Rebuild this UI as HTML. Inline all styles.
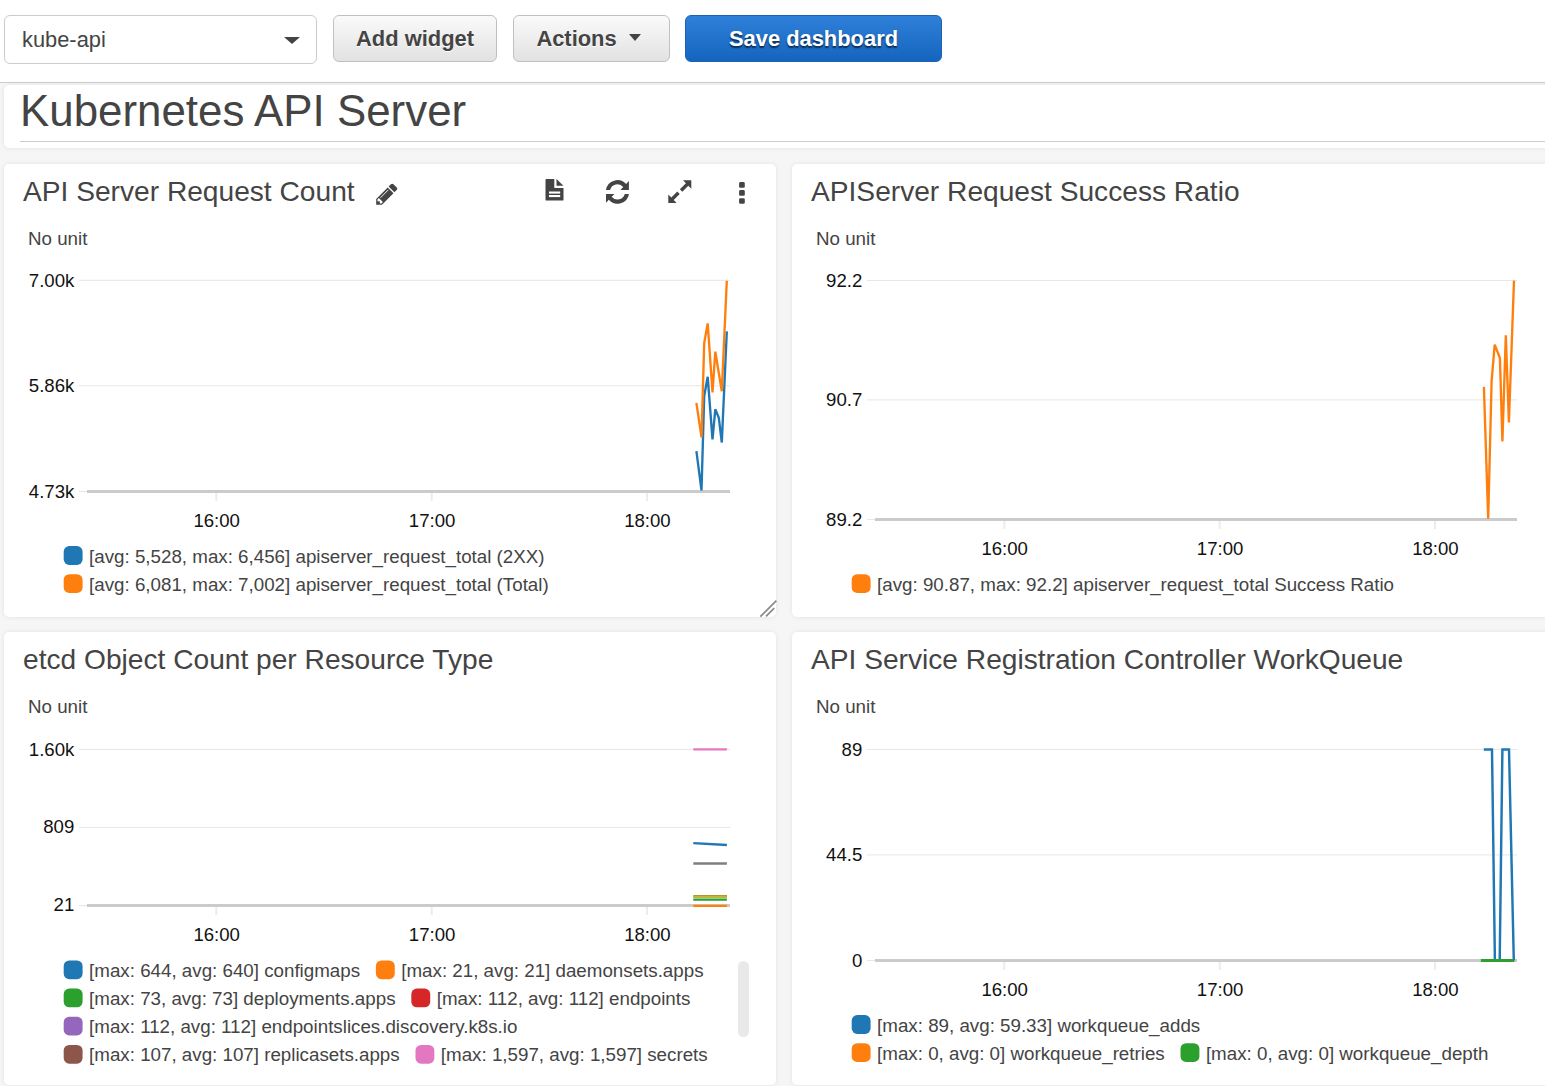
<!DOCTYPE html>
<html lang="en">
<head>
<meta charset="utf-8">
<title>kube-api</title>
<style>
*{box-sizing:border-box;margin:0;padding:0}
html,body{width:1545px;height:1086px;overflow:hidden}
body{background:#f6f6f6;font-family:"Liberation Sans",Arial,sans-serif;color:#444;position:relative}
.abs{position:absolute}
#toolbar{position:absolute;left:0;top:0;width:1545px;height:83px;background:#fff;border-bottom:1px solid #ccc}
#sel{position:absolute;left:4px;top:15px;width:313px;height:49px;border:1px solid #ccc;border-radius:6px;background:#fff;font-size:21.85px;line-height:47px;padding-left:17px;color:#444}
#sel i{position:absolute;right:16px;top:21px;width:0;height:0;border-left:8px solid transparent;border-right:8px solid transparent;border-top:7.5px solid #444}
.btn{position:absolute;top:15px;height:47px;border:1px solid #c0c0c0;border-radius:6px;background:linear-gradient(#fafafa,#e2e2e2);font-weight:bold;font-size:21.9px;line-height:45.5px;text-align:center;color:#444;white-space:nowrap;text-shadow:0 1px 0 #fff}
.btn.pri{background:linear-gradient(#2f80d8,#1565c0);border-color:#1a62b4;color:#fff;text-shadow:0 1.5px 1.5px rgba(0,0,0,.6)}
.caret{position:absolute;left:114.9px;top:17.9px;width:0;height:0;border-left:6.6px solid transparent;border-right:6.6px solid transparent;border-top:7.3px solid #444}
.panel{position:absolute;background:#fff;border-radius:5px;box-shadow:0 0 5px rgba(0,0,0,.085)}
.ptitle{position:absolute;left:19px;top:10px;font-size:28.15px;line-height:36px;white-space:nowrap;color:#444}
.unit{position:absolute;left:24px;top:64.4px;font-size:18.75px;line-height:22px;color:#444;white-space:nowrap}
svg{position:absolute;left:0;top:0;overflow:visible}
svg text{font-family:"Liberation Sans",Arial,sans-serif;font-size:18.6px;fill:#111}
.lg{position:absolute;font-size:18.75px;line-height:28.17px;color:#444;white-space:nowrap}
.lg i{display:inline-block;width:25.4px;height:1px}
.lg span{display:inline-block;margin-right:15.8px}
</style>
</head>
<body>
<div id="toolbar">
  <div id="sel">kube-api<i></i></div>
  <div class="btn" style="left:333px;width:164px">Add widget</div>
  <div class="btn" style="left:513px;width:157px;text-align:left;padding-left:22.4px">Actions<span class="caret"></span></div>
  <div class="btn pri" style="left:685px;width:257px">Save dashboard</div>
</div>

<div class="panel" id="tp" style="left:4px;top:85px;width:1560px;height:63px">
  <div class="abs" style="left:16px;top:0px;font-size:43.87px;line-height:52px;color:#444;white-space:nowrap">Kubernetes API Server</div>
  <div class="abs" style="left:16px;top:56px;width:1540px;height:1px;background:#ccc"></div>
</div>

<!-- PANEL 1 -->
<div class="panel" id="p1" style="left:4px;top:164px;width:772px;height:453px">
  <div class="ptitle">API Server Request Count</div>
  <div class="unit">No unit</div>
  <svg width="772" height="453" id="s1">
    <rect x="75" y="115.8" width="651" height="1" fill="#e6e6e6"/>
     <text x="70.3" y="123.3" text-anchor="end">7.00k</text>
    <rect x="75" y="221.3" width="651" height="1" fill="#e6e6e6"/>
     <text x="70.3" y="227.9" text-anchor="end">5.86k</text>
    <rect x="75" y="327.0" width="8" height="1" fill="#e6e6e6"/>
     <text x="70.3" y="333.6" text-anchor="end">4.73k</text>
    <rect x="83" y="326.0" width="643" height="3" fill="#cbcbcb"/>
    <rect x="211.3" y="329.0" width="2" height="8" fill="#ececec"/>
    <text x="212.7" y="362.8" text-anchor="middle">16:00</text>
    <rect x="426.7" y="329.0" width="2" height="8" fill="#ececec"/>
    <text x="428.1" y="362.8" text-anchor="middle">17:00</text>
    <rect x="642.0" y="329.0" width="2" height="8" fill="#ececec"/>
    <text x="643.4" y="362.8" text-anchor="middle">18:00</text>
    <polyline points="692.4,287.2 697.5,326.4 700.2,232.0 703.7,212.8 708.5,275.3 711.3,245.3 714.8,253.8 717.8,278.5 722.8,167.4" fill="none" stroke="#1f77b4" stroke-width="2.35"/>
    <polyline points="692.4,238.9 697.5,273.4 700.2,179.0 703.7,159.4 708.5,228.5 711.3,187.7 717.8,227.3 722.8,116.7" fill="none" stroke="#ff7f0e" stroke-width="2.35"/>
    <g transform="translate(-4,-164)" fill="#444">
    <path fill-rule="evenodd" transform="translate(376.2,202.926) scale(0.013861,-0.013861)" d="M382 -38L482.5 62.5L190.5 354.5L90 254V128H256V-38ZM886 928q0 22 -22 22q-10 0 -17 -7l-542 -542q-7 -7 -7 -17q0 -22 22 -22q10 0 17 7l542 542q7 7 7 17zM832 1120l416 -416l-832 -832h-416v416zM1515 1024q0 -53 -37 -90l-166 -166l-416 416l166 165q36 38 90 38q53 0 91 -38l235 -234q37 -39 37 -91z"/>
    <path d="M545.5,179.9 q0,-0.9 0.9,-0.9 H554.3 V188 H563.5 V199.7 q0,0.9 -0.9,0.9 H546.4 q-0.9,0 -0.9,-0.9 Z M556.5,179 L563.4,185.8 H556.5 Z"/>
    <rect x="549" y="191.5" width="11.2" height="2.1" fill="#fff"/><rect x="549" y="195" width="11.2" height="2.1" fill="#fff"/>
    <path d="M605.92,189.90 A11.7,11.7 0 0 1 626.08,184.00 L628.90,181.00 V189.90 H620.40 L623.27,187.01 A7.6,7.6 0 0 0 610.12,189.90 Z"/>
    <path d="M605.92,189.90 A11.7,11.7 0 0 1 626.08,184.00 L628.90,181.00 V189.90 H620.40 L623.27,187.01 A7.6,7.6 0 0 0 610.12,189.90 Z" transform="rotate(180 617.45 191.9)"/>
    <path d="M683,180.3 H691.3 V188.8 L688.3,185.7 L682.3,191.7 L679.9,189.3 L685.9,183.3 Z"/>
    <path d="M683,180.3 H691.3 V188.8 L688.3,185.7 L682.3,191.7 L679.9,189.3 L685.9,183.3 Z" transform="rotate(180 679.8 191.65)"/>
    <rect x="739.1" y="182.1" width="5.7" height="5.7" rx="1.4"/>
    <rect x="739.1" y="190.1" width="5.7" height="5.7" rx="1.4"/>
    <rect x="739.1" y="198.15" width="5.7" height="5.7" rx="1.4"/>
    <path d="M760.3,616.7 L776.4,600.6 M766,616.3 L774.2,608.1" stroke="#8c8c8c" stroke-width="1.8" fill="none"/>
    </g>
    <rect x="59.69" y="382.10" width="18.9" height="18.8" rx="5.6" fill="#1f77b4"/>
    <rect x="59.69" y="410.20" width="18.9" height="18.8" rx="5.6" fill="#ff7f0e"/>
  </svg>
  <div class="lg" style="left:59.7px;top:378.7px"><i class="sp"></i>[avg: 5,528, max: 6,456] apiserver_request_total (2XX)</div>
  <div class="lg" style="left:59.7px;top:406.7px"><i class="sp"></i>[avg: 6,081, max: 7,002] apiserver_request_total (Total)</div>
</div>

<!-- PANEL 2 -->
<div class="panel" id="p2" style="left:792px;top:164px;width:772px;height:453px">
  <div class="ptitle">APIServer Request Success Ratio</div>
  <div class="unit">No unit</div>
  <svg width="772" height="453" id="s2">
    <rect x="75" y="116.0" width="650" height="1" fill="#e6e6e6"/>
     <text x="70.3" y="122.6" text-anchor="end">92.2</text>
    <rect x="75" y="235.4" width="650" height="1" fill="#e6e6e6"/>
     <text x="70.3" y="242.0" text-anchor="end">90.7</text>
    <rect x="75" y="355.0" width="8" height="1" fill="#e6e6e6"/>
     <text x="70.3" y="361.6" text-anchor="end">89.2</text>
    <rect x="83" y="354.0" width="642" height="3" fill="#cbcbcb"/>
    <rect x="211.3" y="357.0" width="2" height="8" fill="#ececec"/>
    <text x="212.7" y="390.8" text-anchor="middle">16:00</text>
    <rect x="426.7" y="357.0" width="2" height="8" fill="#ececec"/>
    <text x="428.1" y="390.8" text-anchor="middle">17:00</text>
    <rect x="642.0" y="357.0" width="2" height="8" fill="#ececec"/>
    <text x="643.4" y="390.8" text-anchor="middle">18:00</text>
    <polyline points="691.9,222.9 696.2,354.8 699.6,217.3 702.7,180.6 707.9,194.0 710.4,277.4 713.8,171.3 716.9,258.5 722.0,116.6" fill="none" stroke="#ff7f0e" stroke-width="2.35"/>
    <rect x="59.69" y="410.20" width="18.9" height="18.8" rx="5.6" fill="#ff7f0e"/>
  </svg>
  <div class="lg" style="left:59.7px;top:406.7px"><i class="sp"></i>[avg: 90.87, max: 92.2] apiserver_request_total Success Ratio</div>
</div>

<!-- PANEL 3 -->
<div class="panel" id="p3" style="left:4px;top:632px;width:772px;height:453px">
  <div class="ptitle">etcd Object Count per Resource Type</div>
  <div class="unit">No unit</div>
  <svg width="772" height="453" id="s3">
    <rect x="75" y="116.9" width="651" height="1" fill="#e6e6e6"/>
     <text x="70.3" y="123.5" text-anchor="end">1.60k</text>
    <rect x="75" y="194.9" width="651" height="1" fill="#e6e6e6"/>
     <text x="70.3" y="201.2" text-anchor="end">809</text>
    <rect x="75" y="273.0" width="8" height="1" fill="#e6e6e6"/>
     <text x="70.3" y="278.7" text-anchor="end">21</text>
    <rect x="83" y="272.0" width="643" height="3" fill="#cbcbcb"/>
    <rect x="211.3" y="275.0" width="2" height="8" fill="#ececec"/>
    <text x="212.7" y="308.8" text-anchor="middle">16:00</text>
    <rect x="426.7" y="275.0" width="2" height="8" fill="#ececec"/>
    <text x="428.1" y="308.8" text-anchor="middle">17:00</text>
    <rect x="642.0" y="275.0" width="2" height="8" fill="#ececec"/>
    <text x="643.4" y="308.8" text-anchor="middle">18:00</text>
    <polyline points="689.3,273.9 722.9,273.9" fill="none" stroke="#ff7f0e" stroke-width="2.3"/>
    <polyline points="689.3,117.4 722.9,117.4" fill="none" stroke="#e377c2" stroke-width="2.35"/>
    <polyline points="689.3,211.2 722.9,213.0" fill="none" stroke="#1f77b4" stroke-width="2.35"/>
    <polyline points="689.3,231.5 722.9,231.5" fill="none" stroke="#7f7f7f" stroke-width="2.35"/>
    <polyline points="689.3,264.4 722.9,264.4" fill="none" stroke="#b08a2e" stroke-width="2.9"/>
    <polyline points="689.9,264.5 722.3,264.5" fill="none" stroke="#bcbd22" stroke-width="1.6"/>
    <polyline points="689.3,267.6 722.9,267.6" fill="none" stroke="#2ca02c" stroke-width="2.35"/>
    <rect x="59.69" y="328.40" width="18.9" height="18.8" rx="5.6" fill="#1f77b4"/>
    <rect x="371.88" y="328.40" width="18.9" height="18.8" rx="5.6" fill="#ff7f0e"/>
    <rect x="59.69" y="356.55" width="18.9" height="18.8" rx="5.6" fill="#2ca02c"/>
    <rect x="407.31" y="356.55" width="18.9" height="18.8" rx="5.6" fill="#d62728"/>
    <rect x="59.69" y="384.70" width="18.9" height="18.8" rx="5.6" fill="#9467bd"/>
    <rect x="59.69" y="412.90" width="18.9" height="18.8" rx="5.6" fill="#8c564b"/>
    <rect x="411.47" y="412.90" width="18.9" height="18.8" rx="5.6" fill="#e377c2"/>
  </svg>
  <div class="lg" style="left:59.7px;top:324.7px"><span><i class="sp"></i>[max: 644, avg: 640] configmaps</span><span><i class="sp"></i>[max: 21, avg: 21] daemonsets.apps</span></div>
  <div class="lg" style="left:59.7px;top:352.7px"><span><i class="sp"></i>[max: 73, avg: 73] deployments.apps</span><span><i class="sp"></i>[max: 112, avg: 112] endpoints</span></div>
  <div class="lg" style="left:59.7px;top:380.7px"><span><i class="sp"></i>[max: 112, avg: 112] endpointslices.discovery.k8s.io</span></div>
  <div class="lg" style="left:59.7px;top:408.7px"><span><i class="sp"></i>[max: 107, avg: 107] replicasets.apps</span><span><i class="sp"></i>[max: 1,597, avg: 1,597] secrets</span></div>
  <div class="abs" style="left:734px;top:328.6px;width:11px;height:76px;border-radius:6px;background:#e9e9e9"></div>
</div>

<!-- PANEL 4 -->
<div class="panel" id="p4" style="left:792px;top:632px;width:772px;height:453px">
  <div class="ptitle">API Service Registration Controller WorkQueue</div>
  <div class="unit">No unit</div>
  <svg width="772" height="453" id="s4">
    <rect x="75" y="116.9" width="650" height="1" fill="#e6e6e6"/>
     <text x="70.3" y="123.5" text-anchor="end">89</text>
    <rect x="75" y="222.4" width="650" height="1" fill="#e6e6e6"/>
     <text x="70.3" y="229.0" text-anchor="end">44.5</text>
    <rect x="75" y="328.0" width="8" height="1" fill="#e6e6e6"/>
     <text x="70.3" y="334.6" text-anchor="end">0</text>
    <rect x="83" y="327.0" width="642" height="3" fill="#cbcbcb"/>
    <rect x="211.3" y="330.0" width="2" height="8" fill="#ececec"/>
    <text x="212.7" y="363.8" text-anchor="middle">16:00</text>
    <rect x="426.7" y="330.0" width="2" height="8" fill="#ececec"/>
    <text x="428.1" y="363.8" text-anchor="middle">17:00</text>
    <rect x="642.0" y="330.0" width="2" height="8" fill="#ececec"/>
    <text x="643.4" y="363.8" text-anchor="middle">18:00</text>
    <polyline points="692.0,328.5 722.1,328.5" fill="none" stroke="#ff7f0e" stroke-width="2.8"/>
    <polyline points="691.8,117.5 700.0,117.5 702.9,328.5 707.7,328.5 710.4,117.5 717.0,117.5 721.8,328.5" fill="none" stroke="#1f77b4" stroke-width="2.45"/>
    <polyline points="688.9,328.5 722.1,328.5" fill="none" stroke="#2ca02c" stroke-width="2.9"/>
    <rect x="59.69" y="383.10" width="18.9" height="18.8" rx="5.6" fill="#1f77b4"/>
    <rect x="59.69" y="411.20" width="18.9" height="18.8" rx="5.6" fill="#ff7f0e"/>
    <rect x="388.52" y="411.20" width="18.9" height="18.8" rx="5.6" fill="#2ca02c"/>
  </svg>
  <div class="lg" style="left:59.7px;top:379.7px"><span><i class="sp"></i>[max: 89, avg: 59.33] workqueue_adds</span></div>
  <div class="lg" style="left:59.7px;top:407.7px"><span><i class="sp"></i>[max: 0, avg: 0] workqueue_retries</span><span><i class="sp"></i>[max: 0, avg: 0] workqueue_depth</span></div>
</div>
</body>
</html>
